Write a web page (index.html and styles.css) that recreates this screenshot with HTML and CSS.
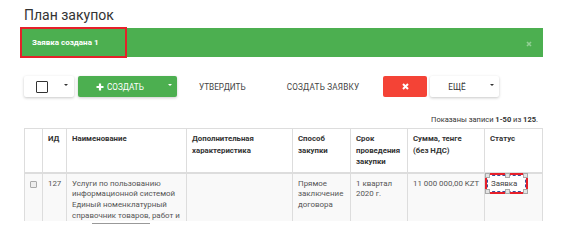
FILE: index.html
```html
<!DOCTYPE html>
<html lang="ru">
<head>
    <meta charset="UTF-8">
    <title>План закупок</title>
    <link rel="stylesheet" href="styles.css">
</head>
<body>
    <div class="page">
        <h1>План закупок</h1>

        <!-- Alert -->
        <div class="alert">
            <div class="alert-mark">Заявка создана 1</div>
            <span class="alert-close">
                <svg width="6" height="6" viewBox="0 0 6 6"><path d="M1 1L5 5M5 1L1 5" stroke="#93cf95" stroke-width="1.6"/></svg>
            </span>
        </div>

        <!-- Toolbar -->
        <div class="toolbar">
            <div class="btn btn-white btn-check">
                <span class="check-box"></span>
                <span class="caret caret-dark"></span>
            </div>
            <div class="btn btn-green">
                <span class="btn-label">
                    <svg width="8" height="8" viewBox="0 0 8 8"><path d="M4 0.5V7.5M0.5 4H7.5" stroke="#fff" stroke-width="2.2"/></svg>
                    СОЗДАТЬ
                </span>
                <span class="caret caret-light"></span>
            </div>
            <div class="btn btn-flat">УТВЕРДИТЬ</div>
            <div class="btn btn-flat">СОЗДАТЬ ЗАЯВКУ</div>
            <div class="btn btn-red">
                <svg width="7" height="7" viewBox="0 0 7 7"><path d="M1 1L6 6M6 1L1 6" stroke="#fff" stroke-width="2"/></svg>
            </div>
            <div class="btn btn-white btn-more">
                <span>ЕЩЁ</span>
                <span class="caret caret-dark"></span>
            </div>
        </div>

        <p class="summary">Показаны записи <b>1-50</b> из <b>125</b>.</p>

        <!-- Table -->
        <div class="table-wrap">
            <table class="grid">
                <colgroup>
                    <col style="width: 18px">
                    <col style="width: 24px">
                    <col style="width: 120px">
                    <col style="width: 106px">
                    <col style="width: 58px">
                    <col style="width: 57px">
                    <col style="width: 77px">
                    <col style="width: 58px">
                </colgroup>
                <thead>
                    <tr>
                        <th></th>
                        <th>ИД</th>
                        <th>Наименование</th>
                        <th>Дополнительная характеристика</th>
                        <th>Способ закупки</th>
                        <th>Срок проведения закупки</th>
                        <th>Сумма, тенге<br>(без НДС)</th>
                        <th>Статус</th>
                    </tr>
                </thead>
                <tbody>
                    <tr>
                        <td><span class="row-check"></span></td>
                        <td>127</td>
                        <td>Услуги по пользованию информационной системой Единый номенклатурный справочник товаров, работ и</td>
                        <td></td>
                        <td>Прямое заключение договора</td>
                        <td>1 квартал 2020 г.</td>
                        <td class="money">11 000 000,00 KZT</td>
                        <td class="status-cell">
                            <span class="status-mark">
                                Заявка
                                <i class="h h1"></i><i class="h h2"></i><i class="h h3"></i>
                                <i class="h h4"></i><i class="h h5"></i><i class="h h6"></i>
                            </span>
                        </td>
                    </tr>
                </tbody>
            </table>
        </div>
        <div class="scroll-line"></div>
    </div>
</body>
</html>
```

FILE: styles.css
```css
body {
    margin: 0;
    font-family: 'Roboto', 'Liberation Sans', sans-serif;
    background: #fff;
    color: #333;
}
.page {
    width: 523px;
    padding-left: 20px;
}
h1 {
    margin: 0;
    padding: 7px 0 0 4px;
    height: 21px;
    font-size: 14px;
    font-weight: 400;
    color: #333;
}
.alert {
    display: flex;
    align-items: center;
    justify-content: space-between;
    height: 29px;
    background: #4caf50;
    border-left: 1px solid #fff;
}
.alert-mark {
    box-sizing: border-box;
    width: 107px;
    height: 31px;
    margin-left: -1px;
    padding-left: 10px;
    border: 2px solid #e6202a;
    display: flex;
    align-items: center;
    color: #fff;
    font-size: 8px;
    font-weight: 700;
}
.alert-close {
    display: flex;
    margin-right: 11px;
    margin-top: 3px;
}
.toolbar {
    display: flex;
    align-items: center;
    margin-top: 19px;
    padding-left: 4px;
    height: 21px;
}
.btn {
    box-sizing: border-box;
    height: 21px;
    display: flex;
    align-items: center;
    font-size: 8.2px;
    color: #333;
    border-radius: 2px;
}
.btn-white {
    background: #fff;
    box-shadow: 0 1px 3px rgba(0, 0, 0, 0.22);
}
.btn-check {
    width: 50px;
    padding: 0 6px 0 12px;
    justify-content: space-between;
}
.check-box {
    box-sizing: border-box;
    width: 12px;
    height: 12px;
    border: 1.5px solid #333;
    border-radius: 1px;
}
.caret {
    width: 0;
    height: 0;
    border-left: 2.5px solid transparent;
    border-right: 2.5px solid transparent;
    margin-top: -3px;
}
.caret-dark {
    border-top: 2.5px solid #333;
}
.caret-light {
    border-top: 2.5px solid #fff;
}
.btn-green {
    width: 99px;
    margin-left: 4px;
    padding: 0 5px 0 18px;
    justify-content: space-between;
    background: #4caf50;
    color: #fff;
    box-shadow: 0 1px 3px rgba(0, 0, 0, 0.2);
}
.btn-label {
    display: flex;
    align-items: center;
    gap: 3px;
}
.btn-flat {
    padding: 0 20px 0 22px;
    color: #444;
}
.btn-flat + .btn-flat {
    padding-left: 21px;
    letter-spacing: 0.2px;
}
.btn-red {
    width: 44px;
    margin-left: 4px;
    justify-content: center;
    background: #f44336;
}
.btn-more {
    width: 69px;
    margin-left: 3px;
    padding: 0 5px 0 18px;
    justify-content: space-between;
}
.summary {
    margin: 17px 5px 0 0;
    text-align: right;
    font-size: 7.5px;
    line-height: 11px;
    color: #333;
}
.table-wrap {
    margin: 3px 0 0 4px;
    width: 519px;
    height: 93px;
    overflow: hidden;
}
.grid {
    width: 519px;
    table-layout: fixed;
    border-collapse: collapse;
}
.grid th,
.grid td {
    border: 1px solid #ddd;
    vertical-align: top;
    text-align: left;
    padding: 4px 5px;
}
.grid th {
    height: 34px;
    font-size: 7.8px;
    font-weight: 700;
    line-height: 11.6px;
    color: #333;
    border-bottom: 2px solid #ddd;
}
.grid td {
    background: #f9f9f9;
    color: #555;
    font-size: 7.9px;
    line-height: 10.6px;
    padding-top: 5px;
}
.grid td.money {
    text-align: right;
    white-space: nowrap;
}
.row-check {
    display: inline-block;
    box-sizing: border-box;
    width: 7px;
    height: 7px;
    margin-top: 2px;
    border: 1px solid #aaa;
    border-radius: 1px;
    background: #eee;
}
.status-cell {
    position: relative;
}
.status-mark {
    position: absolute;
    left: 0;
    top: -1px;
    box-sizing: border-box;
    width: 43px;
    height: 21px;
    padding: 4px 0 0 4px;
    border: 2px solid #e6202a;
    outline: 1px dashed #3d4f9a;
    outline-offset: -3px;
    background: #fff;
    color: #444;
}
.h {
    position: absolute;
    width: 3px;
    height: 3px;
    background: #e4e4e4;
    border: 0.5px solid #aaa;
}
.h1 { left: -2px; top: -2px; }
.h2 { left: 18px; top: -2px; }
.h3 { right: -2px; top: -2px; }
.h4 { left: -2px; bottom: -2px; }
.h5 { left: 18px; bottom: -2px; }
.h6 { right: -2px; bottom: -2px; }
.scroll-line {
    width: 58px;
    height: 1px;
    margin: 2px 0 0 72px;
    background: #999;
}
```
